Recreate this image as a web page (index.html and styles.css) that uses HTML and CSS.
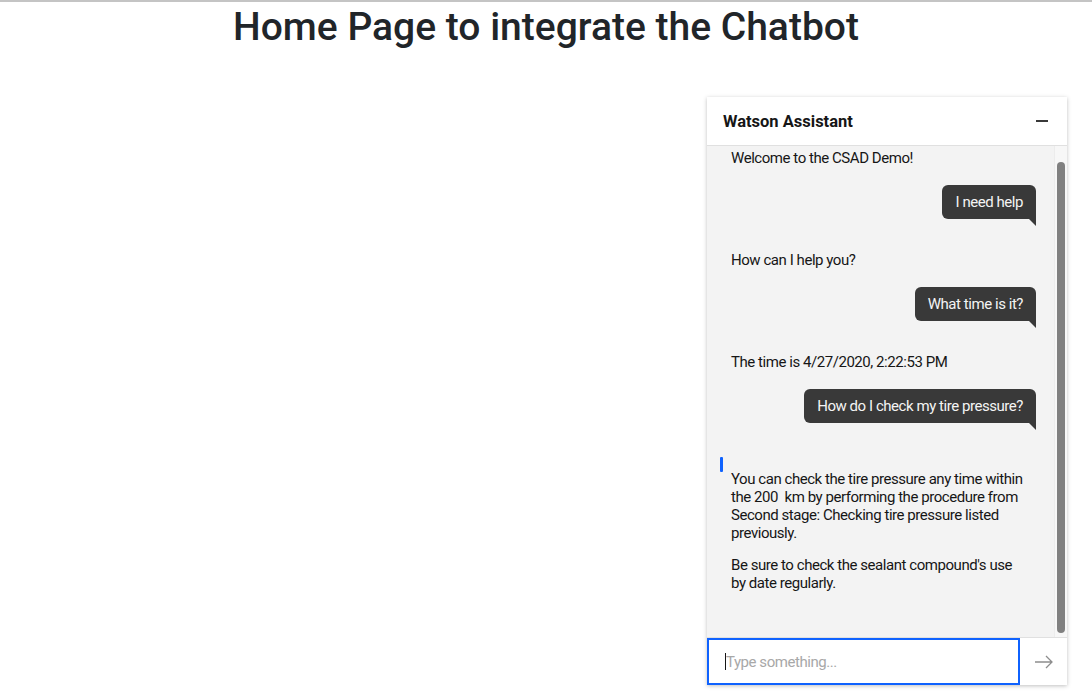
FILE: index.html
```html
<!DOCTYPE html>
<html>
<head>
<meta charset="utf-8">
<link rel="stylesheet" href="styles.css">
</head>
<body>
<div class="page">
  <h1 class="title">Home Page to integrate the Chatbot</h1>
  <div class="dock">
    <div class="chat">
      <div class="chat-header">
        <span class="chat-title">Watson Assistant</span>
        <span class="minimize"></span>
      </div>
      <div class="chat-body">
        <div class="messages">
          <div class="bot">Welcome to the CSAD Demo!</div>
          <div class="user"><span class="bubble">I need help</span></div>
          <div class="bot">How can I help you?</div>
          <div class="user"><span class="bubble">What time is it?</span></div>
          <div class="bot">The time is 4/27/2020, 2:22:53 PM</div>
          <div class="user"><span class="bubble">How do I check my tire pressure?</span></div>
          <div class="bot bot-long">
            <span class="marker"></span>
            <p>You can check the tire pressure any time within the 200&nbsp; km by performing the procedure from Second stage: Checking tire pressure listed previously.</p>
            <p>Be sure to check the sealant compound's use by date regularly.</p>
          </div>
        </div>
        <div class="scrollbar"><div class="thumb"></div></div>
      </div>
      <div class="chat-input">
        <div class="input-box"><span class="caret"></span><span class="placeholder">Type something...</span></div>
        <div class="send">
          <svg width="20" height="14" viewBox="0 0 20 14"><path d="M1 7H18M12 1L18 7L12 13" fill="none" stroke="#8d8d8d" stroke-width="1.3"/></svg>
        </div>
      </div>
    </div>
  </div>
</div>
</body>
</html>
```
FILE: styles.css
```css
html, body { margin: 0; padding: 0; background: #fff; }
body { border-top: 2px solid #c4c4c4; }
.page { height: 691px; display: flex; flex-direction: column; }
.title {
  margin: 0;
  font-family: Roboto, "Liberation Sans", Arial, sans-serif;
  font-weight: 500;
  font-size: 39px;
  line-height: 50px;
  color: #212529;
  text-align: center;
}
.dock { display: flex; justify-content: flex-end; padding: 45px 25px 0 0; }
.chat {
  width: 360px;
  height: 588px;
  display: flex;
  flex-direction: column;
  box-shadow: 0 1px 4px rgba(0,0,0,0.25);
  font-family: Roboto, "Noto Sans", sans-serif;
  font-size: 15px;
  letter-spacing: -0.45px;
  color: #161616;
  background: #f3f3f3;
}
.chat-header {
  height: 48px;
  flex: none;
  background: #fff;
  border-bottom: 1px solid #e0e0e0;
  display: flex;
  align-items: center;
  justify-content: space-between;
  padding: 0 19px 0 16px;
}
.chat-title { font-weight: 700; font-size: 16.5px; letter-spacing: 0; color: #161616; }
.minimize { width: 12px; height: 2px; background: #393939; }
.chat-body { flex: 1; display: flex; min-height: 0; }
.messages { flex: 1; padding: 2px 18px 0 24px; }
.bot { line-height: 18px; padding: 1px 8px 1px 0; }
.user { display: flex; justify-content: flex-end; margin: 17px 0 31px; }
.bubble {
  position: relative;
  background: #393939;
  color: #f4f4f4;
  padding: 8px 13px;
  line-height: 18px;
  border-radius: 6px 6px 0 6px;
}
.bubble::after {
  content: "";
  position: absolute;
  right: 0;
  bottom: -7px;
  border-top: 7px solid #393939;
  border-left: 7px solid transparent;
}
.bot-long { position: relative; padding-top: 16px; }
.bot-long p { margin: 0 0 14px; }
.marker {
  position: absolute;
  left: -11px;
  top: 3px;
  width: 3px;
  height: 15px;
  background: #0f62fe;
  border-radius: 1px;
}
.scrollbar {
  width: 13px;
  flex: none;
  background: #f7f7f7;
  border-left: 1px solid #ececec;
  padding: 16px 0 4px;
  box-sizing: border-box;
  display: flex;
  justify-content: center;
}
.thumb { width: 8px; height: 100%; background: #808080; border-radius: 4px; }
.chat-input { height: 47px; flex: none; display: flex; background: #fff; border-top: 1px solid #e0e0e0; }
.input-box {
  width: 313px;
  box-sizing: border-box;
  border: 2px solid #0f62fe;
  display: flex;
  align-items: center;
  padding-left: 16px;
}
.caret { width: 1px; height: 17px; background: #161616; }
.placeholder { color: #a8a8a8; }
.send { flex: 1; display: flex; align-items: center; justify-content: center; }
```
